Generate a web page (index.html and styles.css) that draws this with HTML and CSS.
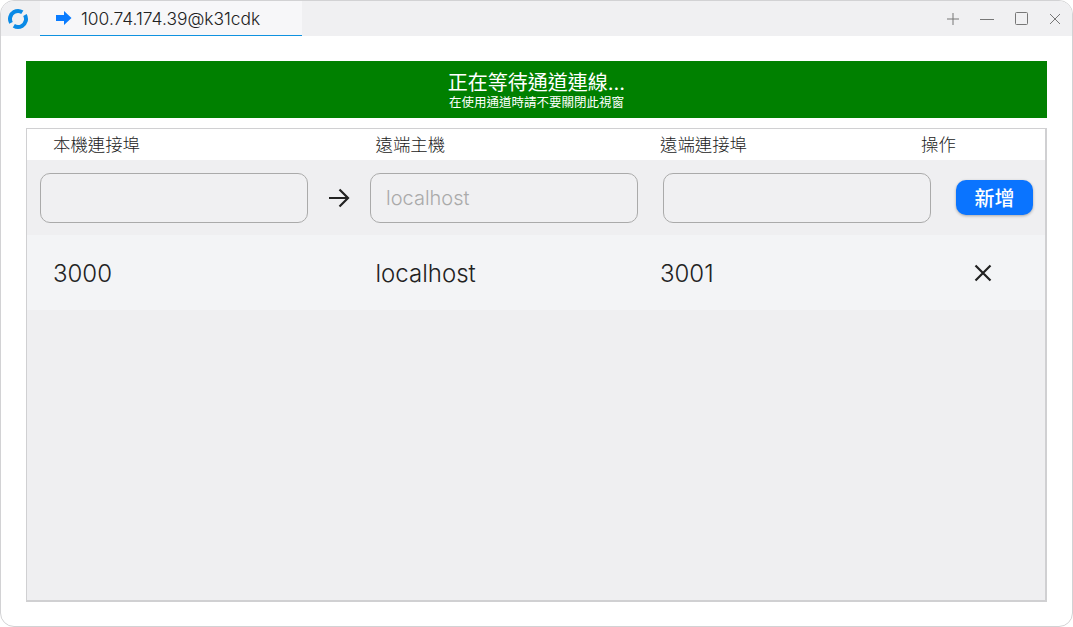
FILE: index.html
```html
<!DOCTYPE html>
<html lang="zh-Hant">
<head>
    <meta charset="UTF-8">
    <meta name="viewport" content="width=device-width, initial-scale=1.0">
    <title>100.74.174.39@k31cdk</title>
    <link rel="stylesheet" href="styles.css">
</head>
<body>
    <div class="window">
        <div class="titlebar">
            <svg class="app-logo" width="22" height="22" viewBox="0 0 22 22">
                <circle cx="11" cy="11" r="8" fill="none" stroke="#0a8ae6" stroke-width="4" stroke-dasharray="21 4.130" transform="rotate(-30 11 11)"/>
            </svg>
            <div class="tab">
                <svg class="tab-icon" width="16" height="14" viewBox="0 0 16 14">
                    <path d="M0 4h8V0l7.500 7L8 14v-4H0z" fill="#0a7cff"/>
                </svg>
                <span>100.74.174.39@k31cdk</span>
            </div>
            <div class="win-buttons">
                <svg width="12" height="12" viewBox="0 0 12 12"><path d="M6 0v12M0 6h12" stroke="#777" fill="none"/></svg>
                <svg width="14" height="12" viewBox="0 0 14 12"><path d="M0 6.500h14" stroke="#777" fill="none"/></svg>
                <svg width="13" height="13" viewBox="0 0 13 13"><rect x="0.500" y="0.500" width="12" height="12" rx="1" stroke="#777" fill="none"/></svg>
                <svg width="12" height="12" viewBox="0 0 12 12"><path d="M1 1l10 10M11 1L1 11" stroke="#777" fill="none"/></svg>
            </div>
        </div>

        <div class="content">
            <div class="banner">
                <div class="banner-title">正在等待通道連線...</div>
                <div class="banner-sub">在使用通道時請不要關閉此視窗</div>
            </div>

            <div class="panel">
                <div class="head-row">
                    <span class="col-local">本機連接埠</span>
                    <span class="col-host">遠端主機</span>
                    <span class="col-remote">遠端連接埠</span>
                    <span>操作</span>
                </div>
                <div class="form-row">
                    <input class="field" type="text">
                    <svg class="arrow" width="22" height="20" viewBox="0 0 22 20">
                        <path d="M1 10h19M11.500 1.500L20 10l-8.500 8.500" fill="none" stroke="#222" stroke-width="2.200"/>
                    </svg>
                    <input class="field" type="text" placeholder="localhost">
                    <input class="field" type="text">
                    <button class="add-btn">新增</button>
                </div>
                <div class="data-row">
                    <span class="col-local">3000</span>
                    <span class="col-host">localhost</span>
                    <span class="col-remote">3001</span>
                    <svg class="remove" width="18" height="18" viewBox="0 0 18 18">
                        <path d="M1.500 1.500l15 15M16.500 1.500l-15 15" fill="none" stroke="#222" stroke-width="2.200"/>
                    </svg>
                </div>
            </div>
        </div>
    </div>
</body>
</html>
```

FILE: styles.css
```css
* {
    box-sizing: border-box;
}

body {
    margin: 0;
    background: #fff;
    font-family: Inter, "Noto Sans CJK TC", sans-serif;
    color: #222;
}

.window {
    width: 1073px;
    height: 627px;
    border: 1px solid #d2d2d4;
    border-radius: 14px;
    background: #fff;
    overflow: hidden;
    display: flex;
    flex-direction: column;
}

.titlebar {
    height: 35px;
    background: #f0f0f2;
    display: flex;
    align-items: center;
}

.app-logo {
    margin-left: 6px;
}

.tab {
    width: 262px;
    height: 35px;
    margin-left: 11px;
    padding-left: 16px;
    background: #f7f7f9;
    border-bottom: 1px solid #1092e0;
    display: flex;
    align-items: center;
    gap: 9px;
    font-size: 17.400px;
    font-weight: 300;
}

.win-buttons {
    margin-left: auto;
    margin-right: 11px;
    display: flex;
    align-items: center;
    gap: 21px;
}

.content {
    flex: 1;
    padding: 25px 25px 24px;
    display: flex;
    flex-direction: column;
    gap: 10px;
}

.banner {
    height: 57px;
    background: #008000;
    color: #fff;
    text-align: center;
    padding-top: 10px;
}

.banner-title {
    font-size: 20px;
    line-height: 24px;
}

.banner-sub {
    font-size: 12.500px;
    line-height: 15px;
}

.panel {
    flex: 1;
    border-style: solid;
    border-color: #d0d0d2;
    border-width: 1px 2px 2px 1px;
    background: #efeff1;
}

.head-row {
    height: 31px;
    background: #fff;
    padding-left: 26px;
    padding-bottom: 2px;
    display: flex;
    align-items: center;
    font-size: 17.400px;
    font-weight: 300;
}

.col-local {
    width: 322.500px;
}

.col-host {
    width: 284.500px;
}

.col-remote {
    width: 261px;
}

.form-row {
    height: 75px;
    padding: 0 13px;
    display: flex;
    align-items: center;
    gap: 25px;
}

.field {
    flex: none;
    width: 268px;
    height: 50px;
    padding: 0 15px;
    border: 1px solid #aaa;
    border-radius: 10px;
    background: #f0f0f2;
    font: inherit;
    font-size: 20px;
    font-weight: 300;
}

.field::placeholder {
    color: #aaa;
}

.arrow {
    flex: none;
    margin: 0 -5px 0 -5px;
}

.add-btn {
    flex: none;
    width: 77px;
    height: 35px;
    border: none;
    border-radius: 10px;
    background: #0a74ff;
    color: #fff;
    font: inherit;
    font-size: 20px;
    font-weight: 500;
    box-shadow: 0 1px 3px rgba(0, 0, 0, 0.3);
}

.data-row {
    height: 75px;
    padding-left: 26px;
    padding-top: 2px;
    background: #f3f4f6;
    display: flex;
    align-items: center;
    font-size: 24px;
    font-weight: 300;
}

.remove {
    margin-left: 52.500px;
    margin-top: -2px;
}
```
